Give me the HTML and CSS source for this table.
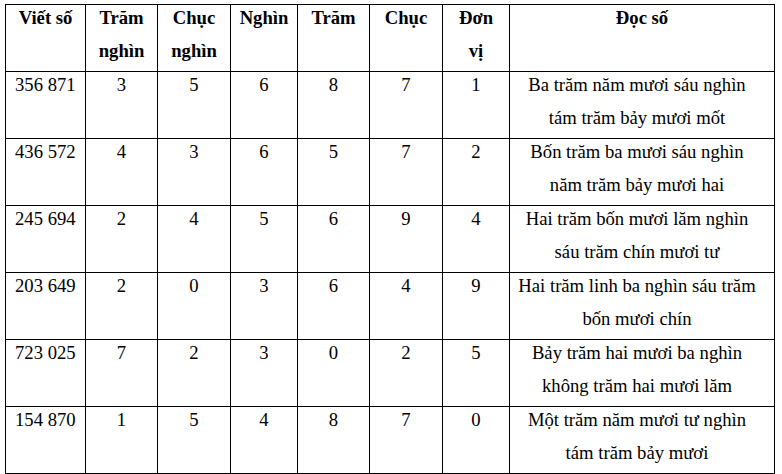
FILE: index.html
```html
<!DOCTYPE html>
<html lang="vi">
<head>
<meta charset="utf-8">
<title>Bảng số</title>
<link rel="stylesheet" href="styles.css">
</head>
<body>
<div class="page">
<table class="grid">
  <colgroup>
    <col class="c1"><col class="c2"><col class="c3"><col class="c4"><col class="c5"><col class="c6"><col class="c7"><col class="c8">
  </colgroup>
  <thead>
    <tr>
      <th><div class="t">Viết số</div></th>
      <th><div class="t">Trăm nghìn</div></th>
      <th><div class="t">Chục nghìn</div></th>
      <th><div class="t">Nghìn</div></th>
      <th><div class="t">Trăm</div></th>
      <th><div class="t">Chục</div></th>
      <th><div class="t">Đơn vị</div></th>
      <th><div class="t">Đọc số</div></th>
    </tr>
  </thead>
  <tbody>
    <tr><td class="num"><div class="t">356 871</div></td><td><div class="t">3</div></td><td><div class="t">5</div></td><td><div class="t">6</div></td><td><div class="t">8</div></td><td><div class="t">7</div></td><td><div class="t">1</div></td><td class="read"><div class="t">Ba trăm năm mươi sáu nghìn tám trăm bảy mươi mốt</div></td></tr>
    <tr><td class="num"><div class="t">436 572</div></td><td><div class="t">4</div></td><td><div class="t">3</div></td><td><div class="t">6</div></td><td><div class="t">5</div></td><td><div class="t">7</div></td><td><div class="t">2</div></td><td class="read"><div class="t">Bốn trăm ba mươi sáu nghìn năm trăm bảy mươi hai</div></td></tr>
    <tr><td class="num"><div class="t">245 694</div></td><td><div class="t">2</div></td><td><div class="t">4</div></td><td><div class="t">5</div></td><td><div class="t">6</div></td><td><div class="t">9</div></td><td><div class="t">4</div></td><td class="read"><div class="t">Hai trăm bốn mươi lăm nghìn sáu trăm chín mươi tư</div></td></tr>
    <tr><td class="num"><div class="t">203 649</div></td><td><div class="t">2</div></td><td><div class="t">0</div></td><td><div class="t">3</div></td><td><div class="t">6</div></td><td><div class="t">4</div></td><td><div class="t">9</div></td><td class="read"><div class="t">Hai trăm linh ba nghìn sáu trăm bốn mươi chín</div></td></tr>
    <tr><td class="num"><div class="t">723 025</div></td><td><div class="t">7</div></td><td><div class="t">2</div></td><td><div class="t">3</div></td><td><div class="t">0</div></td><td><div class="t">2</div></td><td><div class="t">5</div></td><td class="read"><div class="t">Bảy trăm hai mươi ba nghìn không trăm hai mươi lăm</div></td></tr>
    <tr><td class="num"><div class="t">154 870</div></td><td><div class="t">1</div></td><td><div class="t">5</div></td><td><div class="t">4</div></td><td><div class="t">8</div></td><td><div class="t">7</div></td><td><div class="t">0</div></td><td class="read"><div class="t">Một trăm năm mươi tư nghìn tám trăm bảy mươi</div></td></tr>
  </tbody>
</table>
</div>
</body>
</html>
```
FILE: styles.css
```css
html, body {
  margin: 0;
  padding: 0;
  background: #fff;
}
.page {
  padding: 4px 0 0 5px;
}
.grid {
  border-collapse: collapse;
  table-layout: fixed;
  width: 769px;
  font-family: "Liberation Serif", "Times New Roman", serif;
  font-size: 18.67px;
  line-height: 33px;
  color: #000;
}
.c1 { width: 80px; }
.c2 { width: 72px; }
.c3 { width: 73px; }
.c4 { width: 67px; }
.c5 { width: 72px; }
.c6 { width: 73px; }
.c7 { width: 67px; }
.c8 { width: 265px; }
.grid th,
.grid td {
  border: 1px solid #000;
  padding: 0 7px;
  height: 66px;
  vertical-align: top;
  text-align: center;
  box-sizing: border-box;
}
.grid th {
  font-weight: bold;
}
.grid td.num {
  text-align: left;
  padding-left: 9px;
}
.grid td.read {
  padding: 0 12px 0 2px;
}
.t {
  margin-top: -4px;
  margin-bottom: 4px;
}
```
